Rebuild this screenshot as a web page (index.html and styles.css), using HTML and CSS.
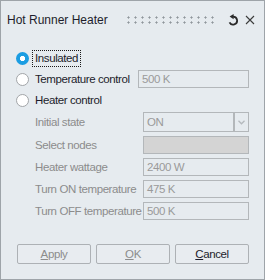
FILE: index.html
```html
<!DOCTYPE html>
<html>

<head>
    <meta charset="utf-8" />
    <title>Hot Runner Heater</title>
    <meta name="viewport" content="width=device-width, initial-scale=1">
    <link rel="stylesheet" href="styles.css">
</head>

<body>
    <div class="dialog">
        <!-- title bar -->
        <div class="titlebar">
            <span class="title">Hot Runner Heater</span>
            <span class="grip"></span>
            <svg class="tb-reset" width="12" height="12" viewBox="0 0 12 12">
                <path d="M6 2.6 A4 4 0 1 1 2.5 8.4" fill="none" stroke="#2a2a2a" stroke-width="1.8" />
                <polygon points="2.6,2.6 6.6,0 6.6,5.2" fill="#2a2a2a" />
            </svg>
            <svg class="tb-close" width="10" height="10" viewBox="0 0 10 10">
                <path d="M1 1 L9 9 M9 1 L1 9" stroke="#3c3c3c" stroke-width="1.1" />
            </svg>
        </div>

        <!-- options -->
        <div class="content">
            <div class="opt">
                <span class="radio on"></span>
                <span class="opt-label focus">Insulated</span>
            </div>
            <div class="opt">
                <span class="radio"></span>
                <span class="opt-label">Temperature control</span>
                <span class="field temp">500 K</span>
            </div>
            <div class="opt">
                <span class="radio"></span>
                <span class="opt-label">Heater control</span>
            </div>

            <div class="sub">
                <span class="sub-label">Initial state</span>
                <span class="combo">
                    <span class="combo-val">ON</span>
                    <span class="combo-arrow">
                        <svg width="7" height="5" viewBox="0 0 7 5">
                            <path d="M0.5 0.8 L3.5 3.8 L6.5 0.8" fill="none" stroke="#b5b9bd" stroke-width="1.3" />
                        </svg>
                    </span>
                </span>

                <span class="sub-label">Select nodes</span>
                <span class="field fill"></span>

                <span class="sub-label">Heater wattage</span>
                <span class="field">2400 W</span>

                <span class="sub-label">Turn ON temperature</span>
                <span class="field">475 K</span>

                <span class="sub-label">Turn OFF temperature</span>
                <span class="field">500 K</span>
            </div>
        </div>

        <!-- buttons -->
        <div class="buttons">
            <button class="btn off"><u>A</u>pply</button>
            <button class="btn off"><u>O</u>K</button>
            <button class="btn"><u>C</u>ancel</button>
        </div>
    </div>
</body>

</html>
```

FILE: styles.css
```css
* {
    box-sizing: border-box;
}

body {
    margin: 0;
    font-family: "Liberation Sans", Arial, sans-serif;
    font-size: 11.5px;
    letter-spacing: -0.4px;
    color: #1d1d2b;
}

.dialog {
    width: 265px;
    height: 280px;
    border: 1px solid #9ea4a9;
    background: #e6ebef;
    display: flex;
    flex-direction: column;
}

/* title bar */
.titlebar {
    height: 38px;
    display: flex;
    align-items: center;
    padding: 0 9px 0 6px;
}

.title {
    font-size: 12px;
    letter-spacing: 0;
}

.grip {
    width: 92px;
    height: 10px;
    margin-left: 17px;
    background-image: radial-gradient(circle, #8f969b 0.9px, transparent 1.2px);
    background-size: 7px 5px;
    background-position: 0 0;
}

.tb-reset {
    margin-left: auto;
}

.tb-close {
    margin-left: 6px;
}

/* options */
.content {
    padding: 10px 15px 0 15px;
}

.opt {
    display: flex;
    align-items: center;
    height: 18px;
    margin-bottom: 3px;
}

.radio {
    width: 13px;
    height: 13px;
    border-radius: 50%;
    border: 1px solid #a2a5a8;
    background: #fff;
    margin-right: 3px;
    flex: none;
}

.radio.on {
    border: none;
    background: radial-gradient(circle, #fff 2.4px, #1b9de2 2.9px);
}

.opt-label {
    border: 1px dotted transparent;
    padding: 0 2px 0 2px;
    line-height: 15px;
}

.opt-label.focus {
    border-color: #1a1a1a;
}

.field {
    height: 18px;
    border: 1px solid #b3b7ba;
    padding-left: 3px;
    line-height: 16px;
    color: #9a9a9a;
}

.field.temp {
    margin-left: auto;
    width: 111px;
}

.field.fill {
    background: #d4d4d4;
}

.sub {
    display: grid;
    grid-template-columns: 1fr 106px;
    row-gap: 4px;
    align-items: center;
    padding-left: 19px;
}

.sub-label {
    color: #8c8c8c;
}

.combo {
    display: flex;
    height: 20px;
}

.combo-val {
    width: 91px;
    border: 1px solid #b3b7ba;
    padding-left: 3px;
    line-height: 18px;
    color: #9a9a9a;
}

.combo-arrow {
    width: 15px;
    border: 1px solid #b3b7ba;
    display: flex;
    align-items: center;
    justify-content: center;
}

/* buttons */
.buttons {
    margin-top: auto;
    padding: 0 15px 15px 16px;
    display: grid;
    grid-template-columns: repeat(3, 1fr);
    gap: 5px;
}

.btn {
    height: 20px;
    border: 1px solid #adb1b5;
    border-radius: 2px;
    background: #e8ecf0;
    font-family: inherit;
    font-size: 11.5px;
    letter-spacing: -0.4px;
    color: #1d1d2b;
    padding: 0;
}

.btn.off {
    color: #8c8c8c;
}
```
